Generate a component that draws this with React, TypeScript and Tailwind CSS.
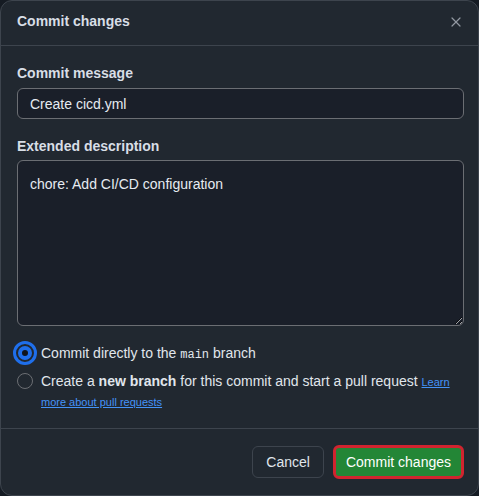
import { X } from "lucide-react"

const App = () => {
    return (
        <div className="w-[479px] h-[496px] bg-[#151b23] overflow-hidden" style={{ fontFamily: '"Liberation Sans", Arial, sans-serif' }}>
            <div className="w-full h-full rounded-[12px] bg-[#212830] border border-[#3d444d] flex flex-col text-[#f0f6fc]">
                {/* header */}
                <div className="h-[45px] flex items-center justify-between pl-[16px] pr-[14px] pb-[3px] border-b border-[#3d444d] shrink-0">
                    <h1 className="text-[14px] font-bold text-[#d8dee6]">Commit changes</h1>
                    <X size={16} strokeWidth={1.8} className="text-[#9198a1]" />
                </div>

                {/* body */}
                <div className="flex-1 pl-[16px] pr-[14px] pt-[17px]">
                    <label className="block text-[14px] font-bold text-[#d8dee6] leading-[20px] mb-[5px]">Commit message</label>
                    <input
                        defaultValue="Create cicd.yml"
                        className="w-full h-[31px] rounded-[6px] border border-[#6b6e73] bg-[#1a1f29] px-[12px] text-[14px] text-[#e6ebf1] outline-none"
                        style={{ fontFamily: '"Liberation Sans", Arial, sans-serif' }}
                    />

                    <label className="block text-[14px] font-bold text-[#d8dee6] leading-[20px] mt-[17px] mb-[4px]">Extended description</label>
                    <textarea
                        defaultValue="chore: Add CI/CD configuration"
                        className="w-full h-[166px] rounded-[6px] border border-[#6b6e73] bg-[#1a1f29] px-[12px] py-[13px] text-[14px] text-[#e6ebf1] outline-none block"
                        style={{ fontFamily: '"Liberation Sans", Arial, sans-serif' }}
                    />

                    <div className="mt-[15px] flex items-center gap-[4px] -ml-[4px]">
                        <span className="w-[24px] h-[24px] rounded-full border-[3px] border-[#1f6feb] flex items-center justify-center shrink-0">
                            <span className="w-[14px] h-[14px] rounded-full border-[4px] border-[#1f6feb] bg-[#10141b]" />
                        </span>
                        <span className="text-[14px] text-[#e0e6ec]">
                            Commit directly to the <code className="text-[12px]" style={{ fontFamily: '"Liberation Mono", monospace' }}>main</code> branch
                        </span>
                    </div>

                    <div className="mt-[6px] flex items-start gap-[8px]">
                        <span className="w-[16px] h-[16px] mt-[2px] rounded-full border border-[#6b6e73] shrink-0" />
                        <p className="text-[14px] text-[#e0e6ec] leading-[20px]">
                            Create a <b>new branch</b> for this commit and start a pull request{" "}
                            <a href="#" className="text-[11px] leading-none text-[#4493f8] underline">Learn more about pull requests</a>
                        </p>
                    </div>
                </div>

                {/* footer */}
                <div className="h-[67px] border-t border-[#3d444d] flex items-center justify-end gap-[9px] pr-[14px] shrink-0">
                    <button className="h-[32px] px-[13px] rounded-[6px] border border-[#3d444d] bg-[#212830] text-[14px] text-[#e0e6ec]">Cancel</button>
                    <button className="h-[34px] px-[10px] rounded-[6px] bg-[#238636] text-[14px] text-white border-[3px] border-[#d1242f]">Commit changes</button>
                </div>
            </div>
        </div>
    )
}

export default App
